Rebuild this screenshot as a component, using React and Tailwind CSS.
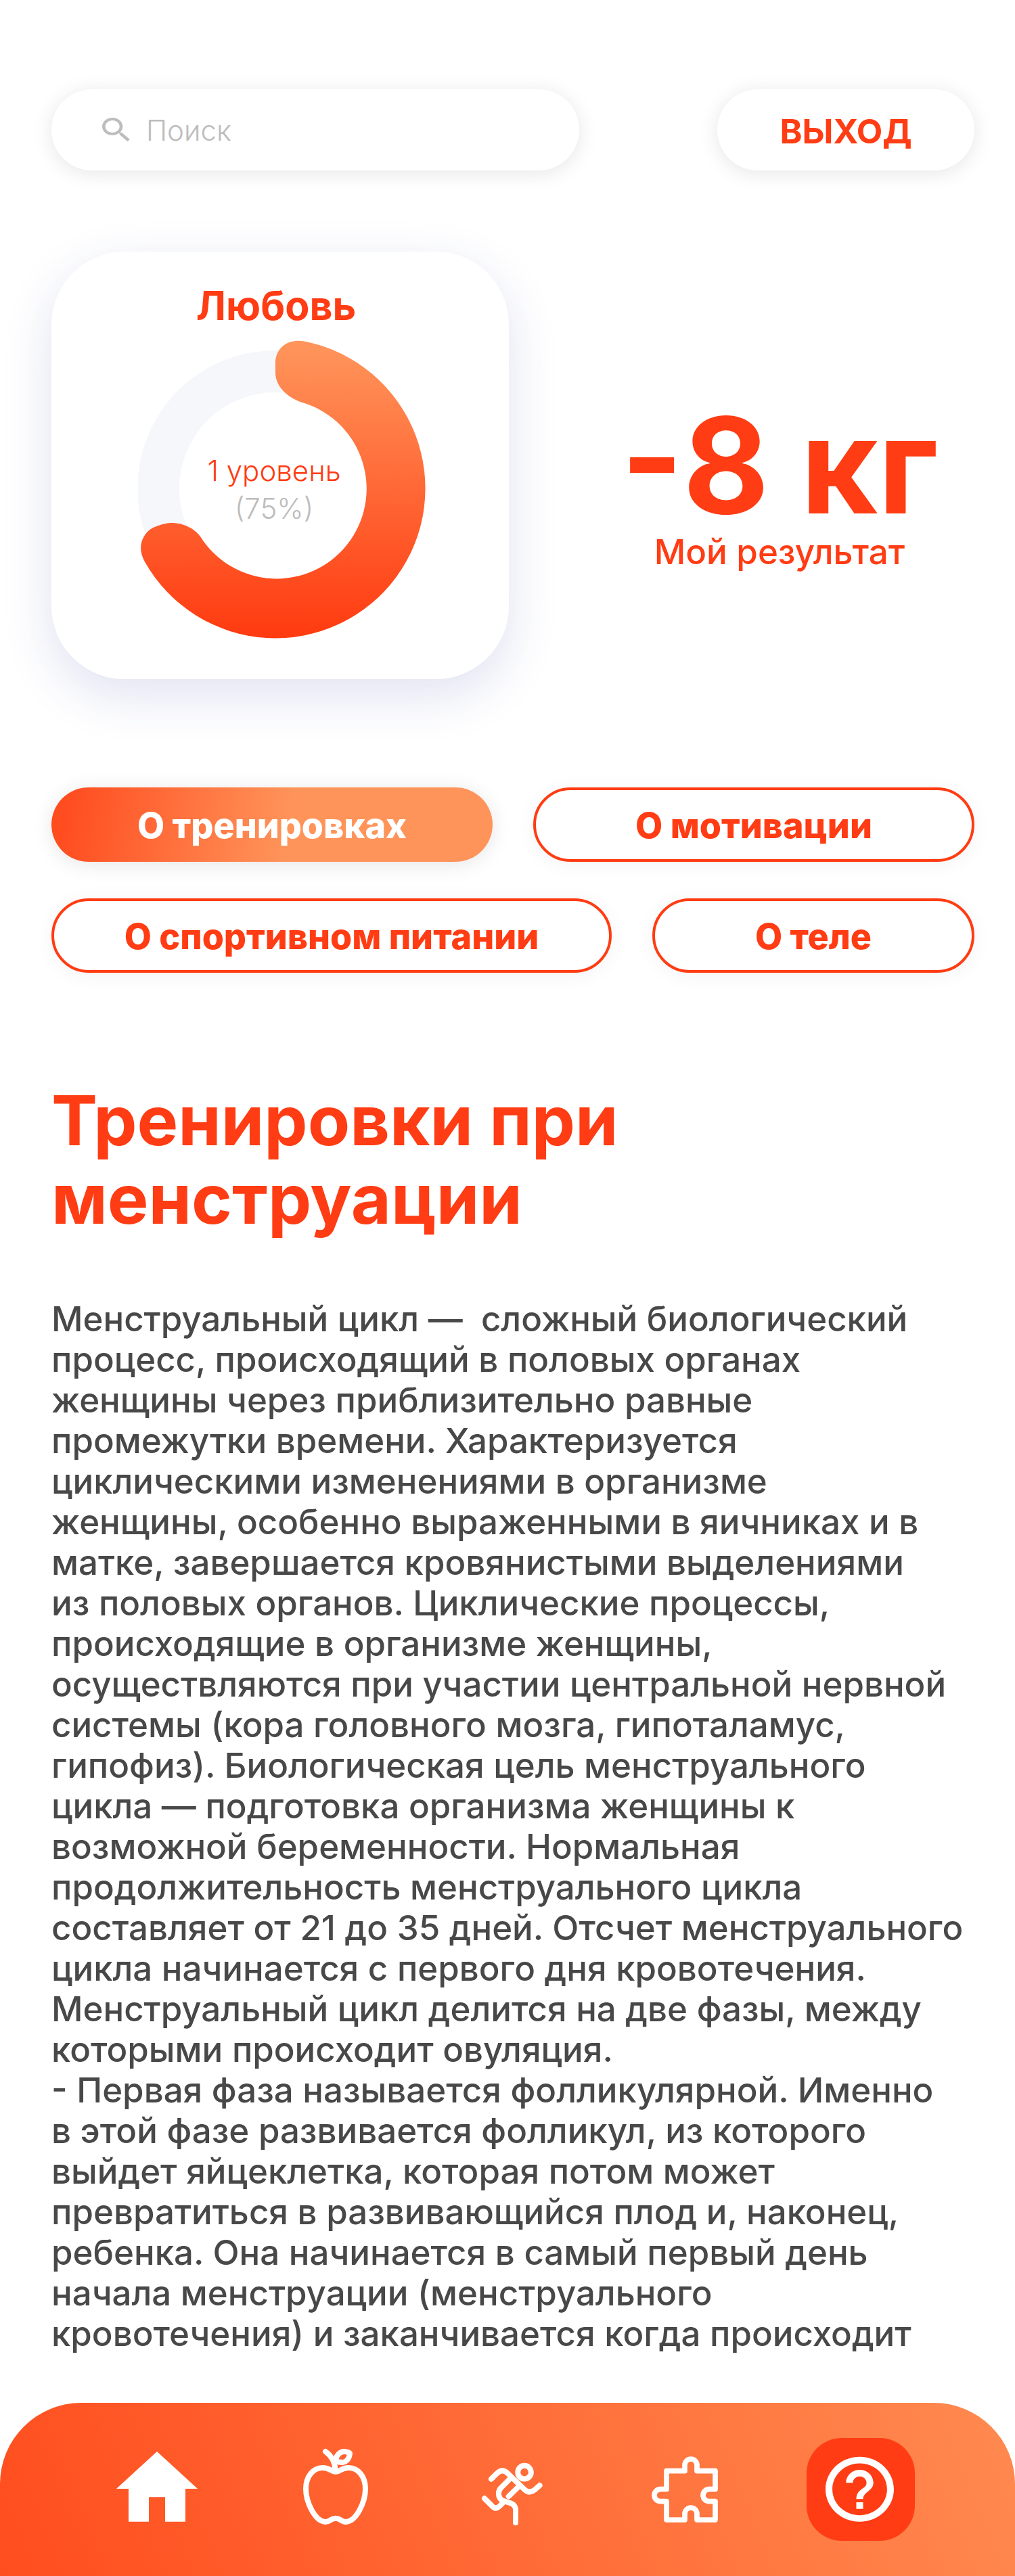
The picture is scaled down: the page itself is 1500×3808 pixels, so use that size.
const navItems = [
  {
    label: "Главная",
    viewBox: "6 42 480 456",
    art: (
      <path
        fill="currentColor"
        d="M246 102 426 267H372V413H282V304H210V413H120V267H66Z"
      />
    ),
  },
  {
    label: "Питание",
    viewBox: "786 42 480 456",
    art: (
      <g fill="none" stroke="currentColor" strokeWidth="24" strokeLinecap="round" strokeLinejoin="round">
        <path d="M1038 192C1060 192 1062 174 1095 174C1140 174 1170 215 1170 268C1170 325 1130 413 1083 414C1062 414 1060 398 1038 398C1016 398 1014 414 993 414C946 413 906 325 906 268C906 215 936 174 981 174C1014 174 1016 192 1038 192Z" />
        <path d="M993 102C1015 118 1035 146 1036 182" />
        <path d="M1040 144C1037 118 1060 102 1075 102C1090 103 1097 105 1101 110C1098 135 1085 150 1066 150C1055 150 1047 148 1040 144Z" />
      </g>
    ),
  },
  {
    label: "Тренировки",
    viewBox: "-24 42 480 456",
    art: (
      <g fill="none" stroke="currentColor" strokeWidth="24" strokeLinecap="round" strokeLinejoin="round">
        <circle cx="285" cy="194" r="29.5" />
        <path d="M138 224L163 199Q187 176 209 197L286 271Q306 290 330 272L353 252" />
        <path d="M222 222L180 264C166 280 168 304 184 318C220 331 246 330 246 362V418" />
        <path d="M261 256L215 301" />
        <path d="M108 310L142 344Q157 360 174 345L192 327" />
      </g>
    ),
  },
  {
    label: "Задания",
    viewBox: "756 42 480 456",
    art: (
      <path
        fill="none"
        stroke="currentColor"
        strokeWidth="23"
        strokeLinecap="round"
        strokeLinejoin="round"
        d="M915 188H996V162A27 27 0 0 1 1050 162V188H1131V269H1104A27 27 0 0 0 1104 323H1131V405H1050V378A27 27 0 0 0 996 378V405H915V323H888A27 27 0 0 1 888 269H915Z"
      />
    ),
  },
  {
    label: "Помощь",
    viewBox: "96 72 480 456",
    active: true,
    art: (
      <path
        fill="currentColor"
        transform="translate(149.7 126.7) scale(15.15 14.4)"
        d="M11 18h2v-2h-2v2zm1-16C6.48 2 2 6.48 2 12s4.48 10 10 10 10-4.48 10-10S17.52 2 12 2zm0 18c-4.41 0-8-3.59-8-8s3.59-8 8-8 8 3.59 8 8-3.59 8-8 8zm0-14c-2.21 0-4 1.79-4 4h2c0-1.1.9-2 2-2s2 .9 2 2c0 2-3 1.75-3 5h2c0-2.25 3-2.5 3-5 0-2.21-1.79-4-4-4z"
      />
    ),
  },
];

const articleText = `Менструальный цикл —  сложный биологический
процесс, происходящий в половых органах
женщины через приблизительно равные
промежутки времени. Характеризуется
циклическими изменениями в организме
женщины, особенно выраженными в яичниках и в
матке, завершается кровянистыми выделениями
из половых органов. Циклические процессы,
происходящие в организме женщины,
осуществляются при участии центральной нервной
системы (кора головного мозга, гипоталамус,
гипофиз). Биологическая цель менструального
цикла — подготовка организма женщины к
возможной беременности. Нормальная
продолжительность менструального цикла
составляет от 21 до 35 дней. Отсчет менструального
цикла начинается с первого дня кровотечения.
Менструальный цикл делится на две фазы, между
которыми происходит овуляция.
- Первая фаза называется фолликулярной. Именно
в этой фазе развивается фолликул, из которого
выйдет яйцеклетка, которая потом может
превратиться в развивающийся плод и, наконец,
ребенка. Она начинается в самый первый день
начала менструации (менструального
кровотечения) и заканчивается когда происходит`;

function Header() {
  return (
    <header className="grid grid-cols-[780fr_380fr] gap-51">
      <label className="flex h-30 min-w-0 items-center rounded-full bg-white pl-17 shadow-[0_4px_30px_rgba(0,0,0,0.1)]">
        <svg className="h-12 w-14 shrink-0 text-[#bdbdbd]" viewBox="0 0 24 24" preserveAspectRatio="none" aria-hidden="true">
          <path
            fill="currentColor"
            d="M15.5 14h-.79l-.28-.27C15.41 12.59 16 11.11 16 9.5 16 5.91 13.09 3 9.5 3S3 5.91 3 9.5 5.91 16 9.5 16c1.61 0 3.09-.59 4.23-1.57l.27.28v.79l5 4.99L20.49 19l-4.99-5zm-6 0C7.01 14 5 11.99 5 9.5S7.01 5 9.5 5 14 7.01 14 9.5 11.99 14 9.5 14z"
          />
        </svg>
        <input
          type="search"
          aria-label="Поиск"
          placeholder="Поиск"
          className="ml-4 h-16 min-w-0 flex-1 bg-transparent text-[42px] font-light outline-none placeholder:text-[#bdbdbd]"
        />
      </label>
      <button className="h-30 rounded-full bg-white pt-1 text-[50px] font-bold text-[#ff3c13] shadow-[0_4px_30px_rgba(0,0,0,0.1)]">
        ВЫХОД
      </button>
    </header>
  );
}

function ProgressCard() {
  return (
    <section className="h-158 w-[676px] rounded-[108px] bg-white pt-12 shadow-[0_24px_72px_rgba(50,60,160,0.15)]">
      <h2 className="-ml-3 text-center text-[59px] leading-16 font-bold text-[#ff3c13]">Любовь</h2>
      <div className="relative mt-4 ml-32 h-[444px] w-[426px]">
        <svg className="h-full w-full" viewBox="204 500 426 444" aria-hidden="true">
          <defs>
            <linearGradient id="ring" x1="0" y1="0" x2="0" y2="1">
              <stop offset="0" stopColor="#ff965c" />
              <stop offset="1" stopColor="#ff3a10" />
            </linearGradient>
          </defs>
          <circle cx="407" cy="722" r="173" fill="none" stroke="#f6f7fb" strokeWidth="62" />
          <path
            fill="url(#ring)"
            d="M452 505A221.5 221.5 0 1 1 214 830.5C203 811 209 795 219 785C225 779 243 773 254 773C272 773 288 782 296 793A133 133 0 1 0 450 596C428 590 407 573 407 551V536C407 516 424 499 452 505Z"
          />
        </svg>
        <p className="absolute inset-x-0 top-42 pr-6 text-center text-[42px] leading-14 font-light">
          <span className="block text-[#ff3c13]">1 уровень</span>
          <span className="block text-[#bdbdbd]">(75%)</span>
        </p>
      </div>
    </section>
  );
}

function Topic({ className, children }) {
  return (
    <button className={"h-[110px] min-w-0 rounded-full pt-1 text-[52px] font-extrabold " + className}>
      {children}
    </button>
  );
}

const activeTopic =
  "bg-[linear-gradient(100deg,#ff4d20_4%,#ff945a_54%)] text-white shadow-[0_4px_30px_rgba(0,0,0,0.1)]";
const outlineTopic =
  "border-4 border-[#ff3c13] bg-white text-[#ff3c13] shadow-[0_4px_30px_rgba(0,0,0,0.05)]";

export default function App() {
  return (
    <div className="overflow-hidden bg-white pt-33 font-['Inter','Noto_Sans',sans-serif]">
      <div className="pr-15 pl-19">
        <Header />

        <div className="mt-30 flex">
          <ProgressCard />
          <section className="flex-1 pt-55 pl-28 text-center text-[#ff3c13]">
            <p className="text-[196px] leading-48 font-bold whitespace-nowrap">-8 кг</p>
            <p className="text-[51px] leading-16 font-medium">Мой результат</p>
          </section>
        </div>

        <div className="mt-40 grid grid-cols-2 gap-15">
          <Topic className={activeTopic}>О тренировках</Topic>
          <Topic className={outlineTopic}>О мотивации</Topic>
        </div>
        <div className="mt-[54px] grid grid-cols-[828fr_476fr] gap-15">
          <Topic className={outlineTopic}>О спортивном питании</Topic>
          <Topic className={outlineTopic}>О теле</Topic>
        </div>

        <article className="mt-40">
          <h1 className="text-[102px] leading-29 font-bold text-[#ff3c13]">
            Тренировки при
            <br />
            менструации
          </h1>
          <p className="mt-[90px] text-[51px] leading-15 font-medium whitespace-pre text-[#484848]">{articleText}</p>
        </article>
      </div>

      <nav className="mt-18 flex h-64 justify-between rounded-t-[120px] bg-[linear-gradient(68deg,#ff4d1e,#ff8a50)] pt-13 pr-37 pl-38">
        {navItems.map((item) => (
          <a
            key={item.label}
            href="#"
            aria-label={item.label}
            aria-current={item.active ? "page" : undefined}
            className={
              item.active
                ? "h-38 w-40 rounded-[52px] bg-[#ff3c13] text-white"
                : "h-38 w-40 text-white"
            }
          >
            <svg className="h-full w-full" viewBox={item.viewBox} aria-hidden="true">
              {item.art}
            </svg>
          </a>
        ))}
      </nav>
    </div>
  );
}
